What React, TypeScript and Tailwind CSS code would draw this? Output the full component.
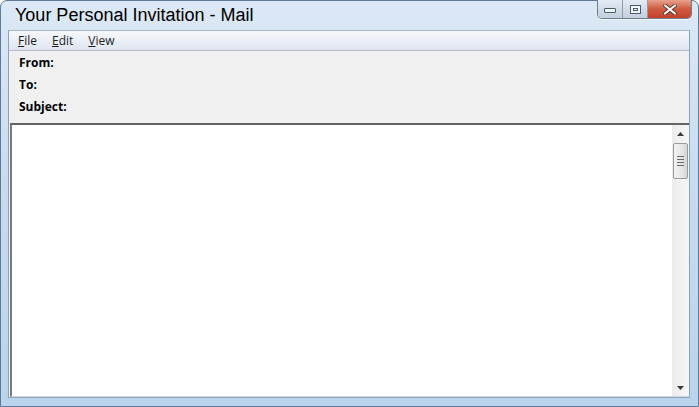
import React from "react";

function Caption() {
  return (
    <div className="flex h-[19px] mt-[-1px] rounded-b-[5px] border border-t-0 border-[#6f7f93] overflow-hidden shadow-[0_1px_0_rgba(255,255,255,0.6)]">
      <div className="w-[25px] h-full flex items-center justify-center bg-gradient-to-b from-[#e4ebf3] to-[#c2cfdd] border-r border-[#8b9bb0]">
        <div className="w-[12px] h-[5px] mt-[3px] border border-[#4a5a70] bg-[#f4f7fb] rounded-[1px]" />
      </div>
      <div className="w-[25px] h-full flex items-center justify-center bg-gradient-to-b from-[#e4ebf3] to-[#c2cfdd] border-r border-[#8b9bb0]">
        <div className="w-[11px] h-[9px] border border-[#4a5a70] flex items-center justify-center bg-[#f4f7fb]">
          <div className="w-[5px] h-[3px] border border-[#4a5a70]" />
        </div>
      </div>
      <div className="w-[43px] h-full flex items-center justify-center bg-gradient-to-b from-[#e8a08c] via-[#cd5a3f] to-[#c4402a]">
        <svg width="14" height="11" viewBox="0 0 14 11">
          <path d="M2 1.5 L12 9.5 M12 1.5 L2 9.5" stroke="#5a2a22" strokeWidth="3.6" strokeLinecap="round" />
          <path d="M2 1.5 L12 9.5 M12 1.5 L2 9.5" stroke="#ffffff" strokeWidth="2.2" strokeLinecap="round" />
        </svg>
      </div>
    </div>
  );
}

function ScrollBar() {
  return (
    <div className="w-[17px] h-full bg-gradient-to-r from-[#ececec] to-[#f6f6f6] flex flex-col items-center">
      <div className="h-[18px] w-full flex items-center justify-center">
        <svg width="7" height="4" viewBox="0 0 7 4"><path d="M0 4 L3.5 0 L7 4 Z" fill="#3a3a3a" /></svg>
      </div>
      <div className="w-[15px] h-[36px] rounded-[2px] border border-[#9a9a9a] bg-gradient-to-r from-[#f2f2f2] via-[#e8e8e8] to-[#d6d6d6] flex flex-col items-center justify-center gap-[2px]">
        <div className="w-[7px] h-[1px] bg-[#6a6a6a]" />
        <div className="w-[7px] h-[1px] bg-[#6a6a6a]" />
        <div className="w-[7px] h-[1px] bg-[#6a6a6a]" />
        <div className="w-[7px] h-[1px] bg-[#6a6a6a]" />
      </div>
      <div className="flex-1" />
      <div className="h-[17px] w-full flex items-center justify-center">
        <svg width="7" height="4" viewBox="0 0 7 4"><path d="M0 0 L3.5 4 L7 0 Z" fill="#3a3a3a" /></svg>
      </div>
    </div>
  );
}

export default function App() {
  const ui = { fontFamily: '"Open Sans", "Liberation Sans", sans-serif' };
  return (
    <div className="w-[699px] h-[407px] overflow-hidden bg-white">
      <div
        className="w-[699px] h-[407px] flex flex-col rounded-t-[7px] border border-[#5f7a98] bg-gradient-to-b from-[#dce8f5] via-[#c6daee] to-[#b9d4ec]"
        style={ui}
      >
        <div className="h-[29px] flex items-start">
          <div
            className="pl-[14px] pt-[3px] text-[18px] leading-[22px] text-black"
            style={{ fontFamily: '"Liberation Sans", Arial, sans-serif' }}
          >
            Your Personal Invitation - Mail
          </div>
          <div className="ml-auto mr-[6px]">
            <Caption />
          </div>
        </div>
        <div className="flex-1 flex flex-col ml-[7px] mr-[8px] mb-[8px] border border-[#8aa2bd] border-t-[#a9b6c6]">
          <div className="h-[20px] flex items-center gap-[15px] px-[9px] text-[12px] text-[#1e1e1e] bg-gradient-to-b from-[#f7f8fb] to-[#dfe5f1] border-b border-[#b9bdc6]">
            <span><span className="underline">F</span>ile</span>
            <span><span className="underline">E</span>dit</span>
            <span><span className="underline">V</span>iew</span>
          </div>
          <div className="h-[72px] bg-[#f0f0f0] flex flex-col pl-[10px] pt-[4px] gap-[6px] text-[12px] font-bold text-black leading-[16px]">
            <div>From:</div>
            <div>To:</div>
            <div>Subject:</div>
          </div>
          <div className="flex-1 flex bg-[#f0f0f0] pl-[1px]">
            <div className="flex-1 flex border-t-2 border-l-2 border-t-[#646464] border-l-[#7a7a7a] border-b border-b-[#d8d8d8] bg-white">
              <div className="flex-1 bg-white" />
              <ScrollBar />
            </div>
          </div>
        </div>
      </div>
    </div>
  );
}
